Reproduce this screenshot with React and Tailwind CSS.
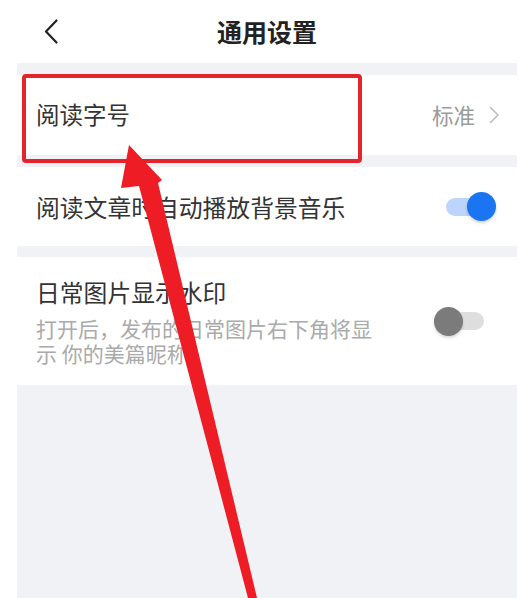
const font = { fontFamily: '"Noto Sans CJK SC", "Noto Sans", sans-serif' };

function Toggle({ on }) {
  return (
    <div className="relative w-[62px] h-[30px] flex items-center shrink-0">
      <div
        className={
          on
            ? "absolute left-[12px] right-[4px] h-[18px] rounded-full bg-[#bcd5fb]"
            : "absolute left-[8px] right-[12px] h-[18px] rounded-full bg-[#dedede]"
        }
      />
      <div
        className={
          on
            ? "absolute right-0 w-[29px] h-[29px] rounded-full bg-[#1b74f2] shadow-[0_2px_3px_rgba(0,0,0,0.18)]"
            : "absolute left-0 w-[29px] h-[29px] rounded-full bg-[#7b7b7b] shadow-[0_2px_3px_rgba(0,0,0,0.15)]"
        }
      />
    </div>
  );
}

function Gap({ h }) {
  return <div className={`bg-[#f1f2f5] ${h}`} />;
}

export default function App() {
  return (
    <div className="relative w-[523px] h-[598px] bg-white overflow-hidden" style={font}>
      <div className="ml-[17px] mr-[6px] h-full flex flex-col">
        {/* header */}
        <div className="h-[63px] relative flex items-center justify-center">
          <svg
            className="absolute left-[27px] top-[19px]"
            width="14"
            height="25"
            viewBox="0 0 14 25"
            fill="none"
          >
            <path d="M12.5 1.5 L2 12.5 L12.5 23.5" stroke="#222" strokeWidth="2.2" strokeLinecap="round" strokeLinejoin="round" />
          </svg>
          <h1 className="text-[25px] font-bold text-[#222] leading-none">通用设置</h1>
        </div>

        <Gap h="h-[12px]" />

        <div className="h-[80px] flex items-center justify-between pl-[19px] pr-[17px]">
          <span className="text-[23.5px] text-[#333]">阅读字号</span>
          <div className="flex items-center gap-[14px]">
            <span className="text-[21.5px] text-[#9a9a9a]">标准</span>
            <svg width="11" height="18" viewBox="0 0 11 18" fill="none">
              <path d="M1.5 1.5 L9 9 L1.5 16.5" stroke="#bdbdbd" strokeWidth="1.6" strokeLinecap="round" strokeLinejoin="round" />
            </svg>
          </div>
        </div>

        <Gap h="h-[12px]" />

        <div className="h-[79px] flex items-center justify-between pl-[19px] pr-[21px]">
          <span className="text-[23.8px] text-[#333]">阅读文章时自动播放背景音乐</span>
          <Toggle on />
        </div>

        <Gap h="h-[11px]" />

        <div className="h-[128px] flex items-start justify-between pl-[19px] pr-[21px] pt-[18px]">
          <div className="flex flex-col">
            <span className="text-[23.8px] text-[#333] leading-[34px]">日常图片显示水印</span>
            <p className="w-[345px] text-[21px] text-[#aaaaaa] leading-[25px] mt-[7px]">
              打开后，发布的日常图片右下角将显示 你的美篇昵称
            </p>
          </div>
          <div className="mt-[31px]">
            <Toggle />
          </div>
        </div>

        <div className="flex-1 bg-[#f1f2f5]" />
      </div>

      {/* annotation overlay */}
      <svg className="absolute inset-0 pointer-events-none" width="523" height="598" viewBox="0 0 523 598">
        <rect x="24" y="76" width="336" height="85" rx="2" fill="none" stroke="#e5232c" strokeWidth="4" />
        <polygon
          points="129,145 162,180 158,183 257,598 248,598 139,186 121,188"
          fill="#ee1c25"
        />
      </svg>
    </div>
  );
}
